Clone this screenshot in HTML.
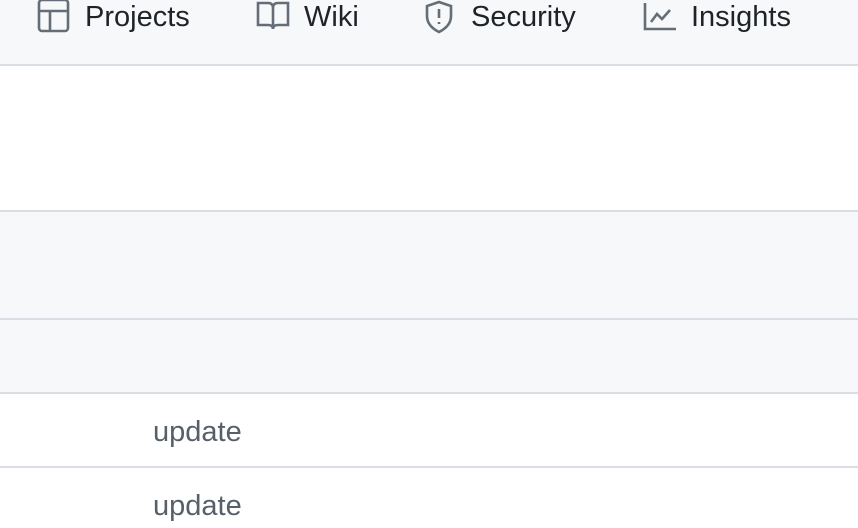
<!DOCTYPE html>
<html><head><style>
body{margin:0;width:858px;height:528px;overflow:hidden;font-family:"Liberation Sans",sans-serif;background:#fff;position:relative}
.a{position:absolute;left:0;width:858px}
.t{position:absolute;font-size:29px;color:#1f2328;top:1px;line-height:32px}
.u{position:absolute;left:153px;font-size:29px;color:#57606a;line-height:30px}
svg{position:absolute}
</style></head><body>
<div class="a" style="top:0;height:64px;background:#f6f8fa"></div>
<div class="a" style="top:64px;height:2px;background:#d8dee4"></div>
<div class="a" style="top:210px;height:2px;background:#d8dee4"></div>
<div class="a" style="top:212px;height:106px;background:#f6f8fa"></div>
<div class="a" style="top:318px;height:2px;background:#d8dee4"></div>
<div class="a" style="top:320px;height:73px;background:#f6f8fa"></div>
<div class="a" style="top:392px;height:2px;background:#d8dee4"></div>
<div class="a" style="top:466px;height:2px;background:#d8dee4"></div>
<svg style="left:37px;top:-2px" width="34" height="35" viewBox="0 0 34 35" fill="none" stroke="#656d76" stroke-width="2.6"><rect x="2" y="2" width="29" height="31" rx="3"/><path d="M2 13H31M13 13V33"/></svg>
<div class="t" style="left:85px">Projects</div>
<svg style="left:256px;top:0" width="34" height="32" viewBox="0 0 34 32" fill="none" stroke="#656d76" stroke-width="2.6"><path d="M2 3H12Q17 3 17 8V29Q17 25 12 25H2ZM32 3H22Q17 3 17 8V29Q17 25 22 25H32Z"/></svg>
<div class="t" style="left:304px">Wiki</div>
<svg style="left:424px;top:0" width="30" height="34" viewBox="0 0 30 34" fill="none" stroke="#656d76" stroke-width="2.6"><path d="M15 2L27 6V16Q27 26 15 32Q3 26 3 16V6Z"/><path d="M15 9V18M15 22V24"/></svg>
<div class="t" style="left:471px">Security</div>
<svg style="left:643px;top:2px" width="34" height="30" viewBox="0 0 34 30" fill="none" stroke="#656d76" stroke-width="2.6"><path d="M2 1V27H33M8 20L14 12L19 17L27 8"/></svg>
<div class="t" style="left:691px">Insights</div>
<div class="u" style="top:417px">update</div>
<div class="u" style="top:491px">update</div>
</body></html>
